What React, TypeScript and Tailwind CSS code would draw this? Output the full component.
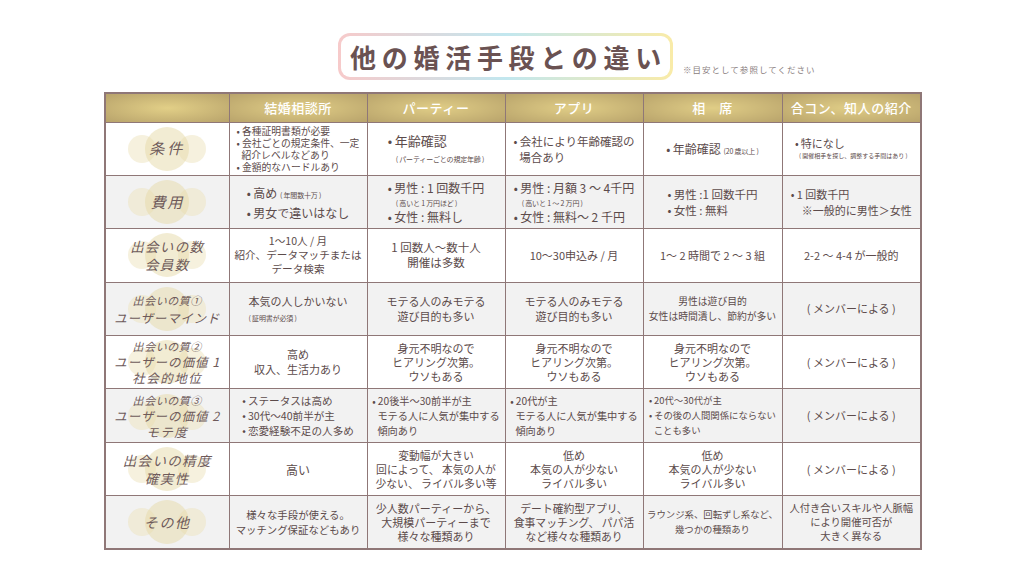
import type { ReactNode } from 'react';

// 比較表のセル内容
type Cell = ReactNode;

const font = { fontFamily: '"Noto Sans CJK JP", "Noto Sans", sans-serif' };

const headers = ['結婚相談所', 'パーティー', 'アプリ', '相\u3000席', '合コン、知人の紹介'];

function Small({ children }: { children: ReactNode }) {
  return <span className="text-[7px] tracking-tight">{children}</span>;
}

function Lines({ lines, size = 'text-[11px]', align = 'text-center', lh = 'leading-[15px]' }: { lines: ReactNode[]; size?: string; align?: string; lh?: string }) {
  return (
    <div className={`${size} ${align} ${lh}`}>
      {lines.map((l, i) => (
        <div key={i}>{l}</div>
      ))}
    </div>
  );
}

const B = '•\u2009';

const rows: { label: ReactNode; cells: Cell[] }[] = [
  {
    label: <div className="text-[15px] tracking-[0.2em]">条件</div>,
    cells: [
      <Lines
        size="text-[9.8px]"
        align="text-left"
        lh="leading-[12px]"
        lines={[B + '各種証明書類が必要', B + '会社ごとの規定条件、一定', '\u2002紹介レベルなどあり', B + '金額的なハードルあり']}
      />,
      <div className="text-left">
        <div className="text-[13px] leading-[17px]">{B}年齢確認</div>
        <div className="pl-[8px] leading-[12px]">
          <Small>( パーティーごとの規定年齢 )</Small>
        </div>
      </div>,
      <Lines size="text-[11.5px]" align="text-left" lh="leading-[16px]" lines={[B + '会社により年齢確認の', '\u2002場合あり']} />,
      <div className="text-[12px]">
        {B}年齢確認 <Small>(20 歳以上 )</Small>
      </div>,
      <div className="text-left">
        <div className="text-[11px] leading-[15px]">{B}特になし</div>
        <div className="pl-[4px] text-[6px] leading-[10px]">( 開催相手を探し、調整する手間はあり )</div>
      </div>,
    ],
  },
  {
    label: <div className="text-[15px] tracking-[0.1em]">費用</div>,
    cells: [
      <Lines
        size="text-[12px]"
        align="text-left"
        lh="leading-[17px]"
        lines={[
          <>
            {B}高め <Small>( 年間数十万 )</Small>
          </>,
          B + '男女で違いはなし',
        ]}
      />,
      <div className="text-left text-[12px] leading-[15px]">
        <div>{B}男性 : 1 回数千円</div>
        <div className="pl-[8px] leading-[11px]">
          <Small>( 高いと 1 万円ほど )</Small>
        </div>
        <div>{B}女性 : 無料し</div>
      </div>,
      <div className="text-left text-[12px] leading-[15px]">
        <div>{B}男性 : 月額 3 〜 4千円</div>
        <div className="pl-[8px] leading-[11px]">
          <Small>( 高いと 1 〜 2 万円 )</Small>
        </div>
        <div>{B}女性 : 無料〜 2 千円</div>
      </div>,
      <Lines size="text-[11.5px]" align="text-left" lh="leading-[16px]" lines={[B + '男性 :1 回数千円', B + '女性 : 無料']} />,
      <Lines size="text-[11px]" align="text-left" lh="leading-[16px]" lines={[B + '1 回数千円', '\u2003※一般的に男性＞女性']} />,
    ],
  },
  {
    label: (
      <div className="text-[13.5px] leading-[18px] tracking-[0.1em]">
        <div>出会いの数</div>
        <div>会員数</div>
      </div>
    ),
    cells: [
      <Lines size="text-[10.6px]" lh="leading-[14px]" lines={['1〜10人 / 月', '紹介、データマッチまたは', 'データ検索']} />,
      <Lines size="text-[11.5px]" lines={['1 回数人〜数十人', '開催は多数']} />,
      <Lines lines={['10〜30申込み / 月']} />,
      <Lines lines={['1〜 2 時間で 2 〜 3 組']} />,
      <Lines lines={['2-2 〜 4-4 が一般的']} />,
    ],
  },
  {
    label: (
      <div className="leading-[18px]">
        <div className="text-[11px] tracking-[0.05em]">出会いの質①</div>
        <div className="text-[12.5px] tracking-[0.06em]">ユーザーマインド</div>
      </div>
    ),
    cells: [
      <div>
        <div className="text-[11px] leading-[15px]">本気の人しかいない</div>
        <div className="leading-[10px]">
          <Small>( 証明書が必須 )</Small>
        </div>
      </div>,
      <Lines lines={['モテる人のみモテる', '遊び目的も多い']} />,
      <Lines lines={['モテる人のみモテる', '遊び目的も多い']} />,
      <Lines size="text-[9.8px]" lines={['男性は遊び目的', '女性は時間潰し、節約が多い']} />,
      <Lines lines={['( メンバーによる )']} />,
    ],
  },
  {
    label: (
      <div className="leading-[16px]">
        <div className="text-[11px] tracking-[0.05em]">出会いの質②</div>
        <div className="text-[12.5px] tracking-[0.08em]">ユーザーの価値 1</div>
        <div className="text-[12.5px] tracking-[0.12em]">社会的地位</div>
      </div>
    ),
    cells: [
      <Lines lines={['高め', '収入、生活力あり']} />,
      <Lines lh="leading-[14px]" lines={['身元不明なので', 'ヒアリング次第。', 'ウソもある']} />,
      <Lines lh="leading-[14px]" lines={['身元不明なので', 'ヒアリング次第。', 'ウソもある']} />,
      <Lines lh="leading-[14px]" lines={['身元不明なので', 'ヒアリング次第。', 'ウソもある']} />,
      <Lines lines={['( メンバーによる )']} />,
    ],
  },
  {
    label: (
      <div className="leading-[16px]">
        <div className="text-[11px] tracking-[0.05em]">出会いの質③</div>
        <div className="text-[12.5px] tracking-[0.08em]">ユーザーの価値 2</div>
        <div className="text-[12.5px] tracking-[0.12em]">モテ度</div>
      </div>
    ),
    cells: [
      <Lines size="text-[10.6px]" align="text-left" lh="leading-[15px]" lines={[B + 'ステータスは高め', B + '30代〜40前半が主', B + '恋愛経験不足の人多め']} />,
      <Lines size="text-[10.2px]" align="text-left" lh="leading-[15px]" lines={[B + '20後半〜30前半が主', '\u2002モテる人に人気が集中する', '\u2002傾向あり']} />,
      <Lines size="text-[10.2px]" align="text-left" lh="leading-[15px]" lines={[B + '20代が主', '\u2002モテる人に人気が集中する', '\u2002傾向あり']} />,
      <Lines size="text-[9.4px]" align="text-left" lh="leading-[15px]" lines={[B + '20代〜30代が主', B + 'その後の人間関係にならない', '\u2002ことも多い']} />,
      <Lines lines={['( メンバーによる )']} />,
    ],
  },
  {
    label: (
      <div className="text-[13.5px] leading-[18px] tracking-[0.1em]">
        <div>出会いの精度</div>
        <div>確実性</div>
      </div>
    ),
    cells: [
      <Lines size="text-[12px]" lines={['高い']} />,
      <Lines size="text-[10.8px]" lh="leading-[14px]" lines={['変動幅が大きい', '回によって、 本気の人が', '少ない、 ライバル多い等']} />,
      <Lines lh="leading-[14px]" lines={['低め', '本気の人が少ない', 'ライバル多い']} />,
      <Lines lh="leading-[14px]" lines={['低め', '本気の人が少ない', 'ライバル多い']} />,
      <Lines lines={['( メンバーによる )']} />,
    ],
  },
  {
    label: <div className="text-[14px] tracking-[0.12em]">その他</div>,
    cells: [
      <Lines size="text-[10.4px]" lines={['様々な手段が使える。', 'マッチング保証などもあり']} />,
      <Lines size="text-[11px]" lh="leading-[14px]" lines={['少人数パーティーから、', '大規模パーティーまで', '様々な種類あり']} />,
      <Lines size="text-[10.8px]" lh="leading-[14px]" lines={['デート確約型アプリ、', '食事マッチング、 パパ活', 'など様々な種類あり']} />,
      <Lines size="text-[9.4px]" lines={['ラウンジ系、回転ずし系など、', '幾つかの種類あり']} />,
      <Lines size="text-[10.3px]" lh="leading-[14px]" lines={['人付き合いスキルや人脈幅', 'により開催可否が', '大きく異なる']} />,
    ],
  },
];

// 左列の丸い飾り
function Bubbles() {
  return (
    <div className="pointer-events-none absolute inset-0 flex items-center justify-center">
      <div className="relative h-[44px] w-[78px]">
        <div className="absolute left-0 top-[8px] h-[28px] w-[28px] rounded-full bg-[#ede3bd]/50" />
        <div className="absolute right-0 top-[8px] h-[28px] w-[28px] rounded-full bg-[#ede3bd]/50" />
        <div className="absolute left-[17px] top-0 h-[44px] w-[44px] rounded-full bg-[#e6d9a8]/50" />
      </div>
    </div>
  );
}

export default function App() {
  return (
    <div className="h-[576px] w-[1024px] overflow-hidden bg-white text-[#5c4b4b]" style={font}>
      {/* タイトル */}
      <div className="flex items-end pl-[338px] pt-[33px]">
        <div className="rounded-[12px] bg-[linear-gradient(90deg,#f7caca_0%,#c2e7ef_50%,#f9eba8_100%)] p-[3px]">
          <div className="flex h-[41px] w-[329px] items-center justify-center rounded-[9px] bg-white">
            <span className="pl-[6px] text-[26px] font-bold tracking-[0.22em] text-[#6a5252]">他の婚活手段との違い</span>
          </div>
        </div>
        <div className="mb-[4px] ml-[10px] text-[8.5px] tracking-[0.12em] text-[#8a8080]">※目安として参照してください</div>
      </div>

      {/* 比較表 */}
      <table className="ml-[104px] mt-[12px] w-[816px] table-fixed border-collapse whitespace-nowrap border-2 border-[#8f7777]">
        <colgroup>
          <col className="w-[124px]" />
          <col className="w-[138px]" />
          <col className="w-[138px]" />
          <col className="w-[138px]" />
          <col className="w-[139px]" />
          <col className="w-[139px]" />
        </colgroup>
        <thead>
          <tr className="h-[29px]">
            <th className="border border-[#8f7777] bg-[radial-gradient(ellipse_at_center,#e2cf87_0%,#b8a36b_100%)]" />
            {headers.map((h) => (
              <th
                key={h}
                className="border border-[#8f7777] bg-[radial-gradient(ellipse_at_center,#e0cd86_0%,#b8a36b_100%)] text-[13px] font-medium tracking-[0.04em] text-white"
              >
                {h}
              </th>
            ))}
          </tr>
        </thead>
        <tbody>
          {rows.map((row, ri) => (
            <tr key={ri} className={`h-[53.4px] ${ri % 2 === 1 ? 'bg-[#f2f2f2]' : 'bg-white'}`}>
              <td className="relative border border-[#8f7777] p-0">
                <Bubbles />
                <div className="relative flex justify-center text-center font-normal italic text-[#6e5a5a]">{row.label}</div>
              </td>
              {row.cells.map((c, ci) => (
                <td key={ci} className="overflow-hidden border border-[#8f7777] px-[3px] py-0">
                  <div className="flex justify-center">{c}</div>
                </td>
              ))}
            </tr>
          ))}
        </tbody>
      </table>
    </div>
  );
}
